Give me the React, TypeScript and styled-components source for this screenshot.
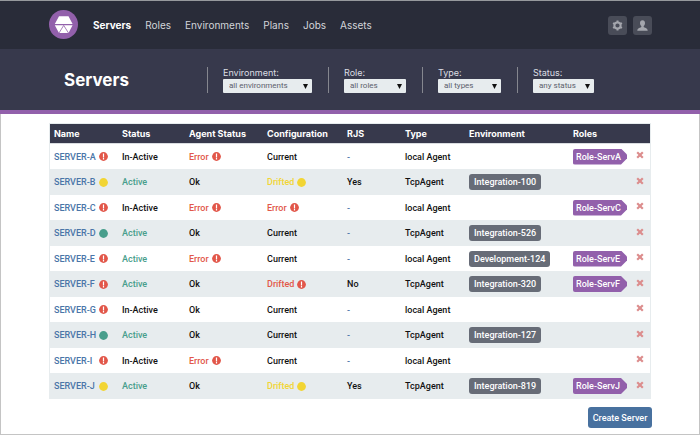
import React from "react";
import styled, { createGlobalStyle } from "styled-components";

const GlobalStyle = createGlobalStyle`
  * { box-sizing: border-box; }
  body {
    margin: 0;
    background: #fff;
    color: #111;
    font: 500 9px/12px Roboto, "Liberation Sans", sans-serif;
  }
  button, select { font: inherit; }
`;

const displayFont = 'Inter, "Liberation Sans", sans-serif';

const tones = {
  red: "#e2574a",
  yellow: "#f2d534",
  green: "#489e8c",
  black: "#111",
  blue: "#4a75a8",
};
type Tone = keyof typeof tones;

const Page = styled.div`
  display: flex;
  flex-direction: column;
  min-height: 100vh;
  border-top: 1px solid #96999d;
`;

const TopBar = styled.header`
  display: flex;
  align-items: center;
  height: 48px;
  padding: 0 48px;
  background: #292c39;
  font-family: ${displayFont};
`;

const LogoLink = styled.a`
  display: flex;
  margin-right: 15px;
`;

const Nav = styled.nav`
  display: flex;
  flex: 1;
  gap: 14px;
`;

const NavLink = styled.a<{ $active?: boolean }>`
  color: ${(p) => (p.$active ? "#fff" : "#d3d5da")};
  font-size: 10px;
  font-weight: ${(p) => (p.$active ? 700 : 400)};
  text-decoration: none;
`;

const Tools = styled.div`
  display: flex;
  gap: 6px;
`;

const IconButton = styled.button`
  display: grid;
  place-items: center;
  width: 19px;
  height: 19px;
  padding: 0;
  border: 0;
  border-radius: 3px;
  background: #494c58;
  color: #a4a6ad;
`;

const FilterBar = styled.section`
  display: flex;
  align-items: center;
  height: 65px;
  padding: 0 64px;
  border-bottom: 4px solid #9260ab;
  background: #37394c;
`;

const Title = styled.h1`
  width: 143px;
  margin: 0;
  color: #fff;
  font-family: ${displayFont};
  font-size: 17px;
  line-height: 24px;
`;

const Filter = styled.div`
  height: 26px;
  margin-right: 16px;
  padding-left: 15px;
  border-left: 1px solid #85878f;

  &:last-child { margin-right: 0; }
`;

const FilterLabel = styled.label`
  display: block;
  color: #dcdee3;
  font-family: ${displayFont};
  font-weight: 400;
  line-height: 12px;
`;

const SelectBox = styled.div<{ $width: number }>`
  position: relative;
  width: ${(p) => p.$width}px;
  height: 14px;

  svg {
    position: absolute;
    top: 5px;
    right: 4px;
    pointer-events: none;
  }
`;

const Select = styled.select`
  display: block;
  width: 100%;
  height: 14px;
  padding: 0 6px;
  border: 0;
  border-radius: 1px;
  appearance: none;
  background: #e7ecee;
  color: #5b606c;
  font-size: 8px;
  font-weight: 400;
  line-height: 14px;
`;

const Main = styled.main`
  display: flex;
  flex: 1;
  flex-direction: column;
  padding: 9px 48px 5px;
  border: 1px solid #c4c4c4;
  border-top: 0;
`;

const Table = styled.table`
  width: 100%;
  border-collapse: separate;
  border-spacing: 0;
  border: 1px solid #e7ecee;
  border-bottom: 0;
  table-layout: fixed;
`;

const HeadCell = styled.th`
  height: 20px;
  padding: 0 0 0 4px;
  border-bottom: 1px solid #d9dce0;
  background: #37394c;
  color: #fff;
  font-family: ${displayFont};
  font-weight: 700;
  text-align: left;
  white-space: nowrap;
`;

const Row = styled.tr`
  height: 25px;

  &:nth-child(even) {
    height: 26px;
    background: #e7ecee;
  }
`;

const Cell = styled.td`
  padding: 0 0 0 4px;
  white-space: nowrap;
`;

const Flagged = styled.span<{ $tone: Tone }>`
  display: flex;
  align-items: center;
  gap: 3px;
  color: ${(p) => tones[p.$tone]};
`;

const ServerLink = styled.a`
  width: 42px;
  color: #4a75a8;
  text-decoration: none;
`;

const EnvChip = styled.span`
  display: inline-block;
  padding: 0 5px;
  border-radius: 3px;
  background: #676c77;
  color: #fff;
  line-height: 16px;
  vertical-align: middle;
`;

const RoleTag = styled.span`
  display: inline-block;
  width: 54px;
  padding-left: 3px;
  border-radius: 2px 0 0 2px;
  background: #9260ab;
  clip-path: polygon(0 0, 48px 0, 100% 6px, 100% 10px, 48px 100%, 0 100%);
  color: #fff;
  line-height: 16px;
  vertical-align: middle;
`;

const DeleteButton = styled.button`
  display: flex;
  padding: 0 0 3px;
  border: 0;
  background: none;
  color: #dc8d8d;
`;

const CreateButton = styled.button`
  align-self: flex-end;
  min-width: 64px;
  height: 21px;
  margin-top: 8px;
  margin-right: -1px;
  padding: 0 4px;
  border: 0;
  border-radius: 3px;
  background: #48719f;
  color: #fff;
`;

const Logo = () => (
  <svg width="30" height="30" viewBox="0 0 30 30" aria-hidden="true">
    <circle cx="15.500" cy="14.500" r="14.500" fill="#9260ab" />
    <path d="M11 6.200h9.500L24.600 14H6.800zM6.800 15.200h17.800L20.500 23H11z" fill="#fff" />
    <path d="M11 23l4.700-7.600 4.800 7.600" fill="none" stroke="#9260ab" strokeWidth=".8" />
  </svg>
);

const Gear = () => (
  <svg width="11" height="11" viewBox="0 0 11 11" aria-hidden="true">
    <circle cx="5.500" cy="5.500" r="3.100" fill="none" stroke="currentColor" strokeWidth="2" />
    <path d="M5.500.4v1.800M5.500 8.800v1.800M1.100 3l1.500.9M8.400 7.100l1.500.9M1.100 8l1.500-.9M8.400 3.900L9.900 3" stroke="currentColor" strokeWidth="2" />
  </svg>
);

const Person = () => (
  <svg width="11" height="11" viewBox="0 0 11 11" fill="currentColor" aria-hidden="true">
    <path d="M5.500.2C7.200.2 8 1.400 8 3c0 1.400-.5 2.500-1.300 3.100v1c.5.8 4 .9 4 3.700H.3c0-2.800 3.500-2.900 4-3.700v-1C3.500 5.500 3 4.400 3 3 3 1.400 3.800.2 5.500.2z" />
  </svg>
);

const Marker = ({ tone }: { tone: Tone }) => (
  <svg width="9" height="9" viewBox="0 0 9 9" aria-hidden="true">
    <circle cx="4.500" cy="4.500" r="4.400" fill={tones[tone]} />
    {tone === "red" && <path d="M4.500 1.500v3.900M4.500 6.100v1.300" stroke="#fff" strokeWidth="1.200" />}
  </svg>
);

const filters = [
  { id: "environment", label: "Environment:", value: "all environments", width: 89 },
  { id: "role", label: "Role:", value: "all roles", width: 62 },
  { id: "type", label: "Type:", value: "all types", width: 63 },
  { id: "status", label: "Status:", value: "any status", width: 61 },
];

const columns: [string, number][] = [
  ["Name", 68],
  ["Status", 67],
  ["Agent Status", 78],
  ["Configuration", 80],
  ["RJS", 58],
  ["Type", 64],
  ["Environment", 104],
  ["Roles", 63],
];

type Server = {
  id: string;
  mark: Tone;
  agent: string;
  active?: boolean;
  error?: boolean;
  config?: [string, Tone];
  rjs?: string;
  env?: string;
  role?: boolean;
};

const servers: Server[] = [
  { id: "A", mark: "red", agent: "local Agent", error: true, role: true },
  { id: "B", mark: "yellow", agent: "TcpAgent", active: true, config: ["Drifted", "yellow"], rjs: "Yes", env: "Integration-100" },
  { id: "C", mark: "red", agent: "local Agent", error: true, config: ["Error", "red"], role: true },
  { id: "D", mark: "green", agent: "TcpAgent", active: true, env: "Integration-526" },
  { id: "E", mark: "red", agent: "local Agent", active: true, error: true, env: "Development-124", role: true },
  { id: "F", mark: "red", agent: "TcpAgent", active: true, config: ["Drifted", "red"], rjs: "No", env: "Integration-320", role: true },
  { id: "G", mark: "red", agent: "local Agent" },
  { id: "H", mark: "green", agent: "TcpAgent", active: true, env: "Integration-127" },
  { id: "I", mark: "red", agent: "local Agent", error: true },
  { id: "J", mark: "yellow", agent: "TcpAgent", active: true, config: ["Drifted", "yellow"], rjs: "Yes", env: "Integration-819", role: true },
];

const ServerRow = ({ server }: { server: Server }) => (
  <Row>
    <Cell>
      <Flagged $tone="blue">
        <ServerLink href="#">SERVER-{server.id}</ServerLink>
        <Marker tone={server.mark} />
      </Flagged>
    </Cell>
    <Cell>
      <Flagged $tone={server.active ? "green" : "black"}>{server.active ? "Active" : "In-Active"}</Flagged>
    </Cell>
    <Cell>
      <Flagged $tone={server.error ? "red" : "black"}>
        {server.error ? "Error" : "Ok"}
        {server.error && <Marker tone="red" />}
      </Flagged>
    </Cell>
    <Cell>
      <Flagged $tone={server.config ? server.config[1] : "black"}>
        {server.config ? server.config[0] : "Current"}
        {server.config && <Marker tone={server.config[1]} />}
      </Flagged>
    </Cell>
    <Cell>
      <Flagged $tone={server.rjs ? "black" : "blue"}>{server.rjs ?? "-"}</Flagged>
    </Cell>
    <Cell>{server.agent}</Cell>
    <Cell>{server.env && <EnvChip>{server.env}</EnvChip>}</Cell>
    <Cell>{server.role && <RoleTag>Role-Serv{server.id}</RoleTag>}</Cell>
    <Cell>
      <DeleteButton aria-label={`Delete SERVER-${server.id}`}>
        <svg width="8" height="8" viewBox="0 0 8 8" aria-hidden="true">
          <path d="M1.200 1.200l5.600 5.600M6.800 1.200L1.200 6.800" stroke="currentColor" strokeWidth="2.200" />
        </svg>
      </DeleteButton>
    </Cell>
  </Row>
);

export default function App() {
  return (
    <Page>
      <GlobalStyle />
      <TopBar>
        <LogoLink href="#" aria-label="Home"><Logo /></LogoLink>
        <Nav>
          {["Servers", "Roles", "Environments", "Plans", "Jobs", "Assets"].map((name) => (
            <NavLink key={name} href="#" $active={name === "Servers"}>{name}</NavLink>
          ))}
        </Nav>
        <Tools>
          <IconButton aria-label="Settings"><Gear /></IconButton>
          <IconButton aria-label="Account"><Person /></IconButton>
        </Tools>
      </TopBar>
      <FilterBar>
        <Title>Servers</Title>
        {filters.map((f) => (
          <Filter key={f.id}>
            <FilterLabel htmlFor={f.id}>{f.label}</FilterLabel>
            <SelectBox $width={f.width}>
              <Select id={f.id}><option>{f.value}</option></Select>
              <svg width="5" height="5" viewBox="0 0 5 5" aria-hidden="true">
                <path d="M0 0h5L2.500 5z" fill="#111" />
              </svg>
            </SelectBox>
          </Filter>
        ))}
      </FilterBar>
      <Main>
        <Table>
          <colgroup>
            {columns.map(([name, width]) => <col key={name} width={width} />)}
            <col />
          </colgroup>
          <thead>
            <tr>
              {columns.map(([name]) => <HeadCell key={name} scope="col">{name}</HeadCell>)}
              <HeadCell aria-label="Actions" />
            </tr>
          </thead>
          <tbody>
            {servers.map((server) => <ServerRow key={server.id} server={server} />)}
          </tbody>
        </Table>
        <CreateButton>Create Server</CreateButton>
      </Main>
    </Page>
  );
}
